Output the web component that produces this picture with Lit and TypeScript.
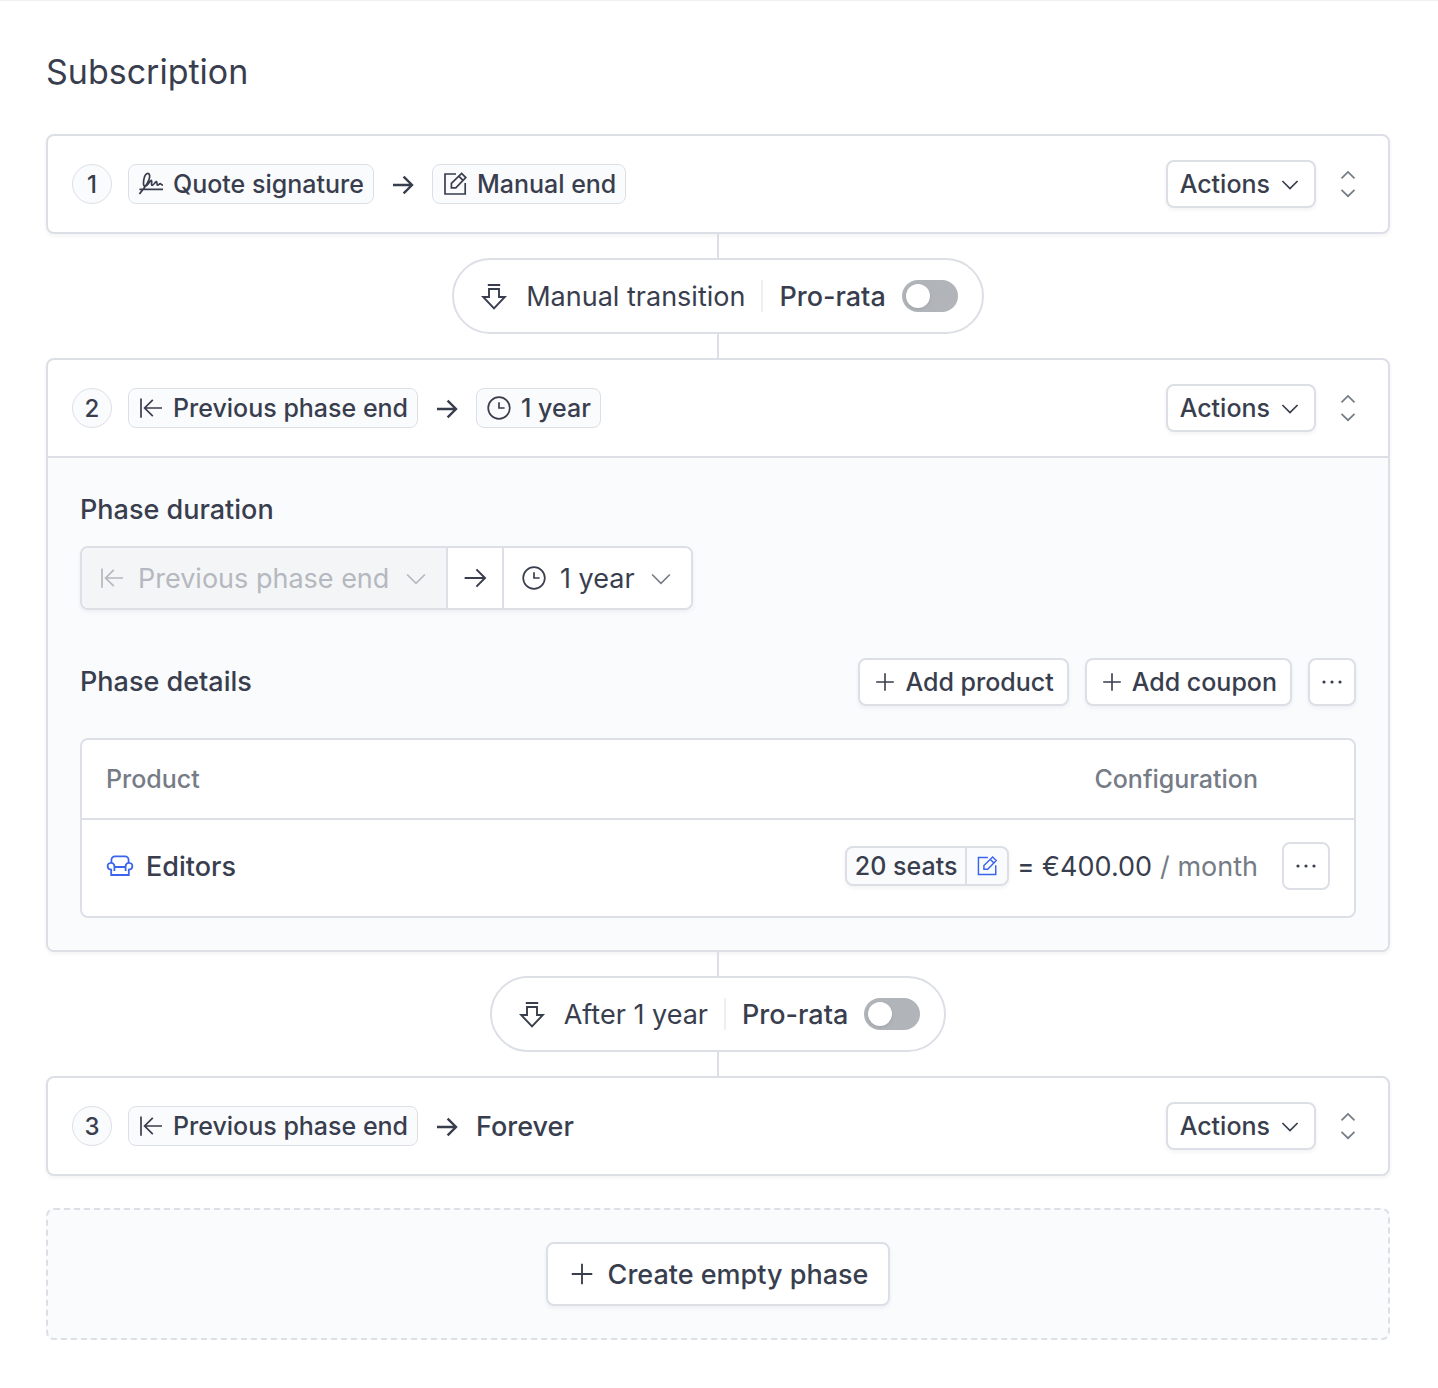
import { LitElement, html, svg, css, nothing, type TemplateResult } from "lit";
import { customElement, property } from "lit/decorators.js";

type IconName =
  | "signature"
  | "edit"
  | "previous"
  | "clock"
  | "arrow"
  | "arrowThin"
  | "transition"
  | "chevron"
  | "sort"
  | "plus"
  | "dots"
  | "sofa";

interface IconShape {
  box: number;
  stroke: number;
  shape: TemplateResult<2>;
}

/* Each icon is drawn on a grid of its own natural size. */
const ICONS: Record<IconName, IconShape> = {
  signature: {
    box: 28,
    stroke: 1.7,
    shape: svg`<path d="M2.4 24C6 19.6 12.9 11.6 12.7 6.2C12.6 2.4 9 2.6 7.6 6.6C6.2 11 5.8 16.4 8.2 16.4C10.8 16.4 12 11.4 14.4 10.4C15.6 11.2 13.6 15.2 15.2 15.4C16.8 15.4 17.6 12 19.4 11.6C20.6 12 19.2 15 20.6 15.2C21.8 15.2 22.2 13.6 23.2 13.6C24 13.6 23.8 15.2 26 15.2M2.4 19.4H26"/>`,
  },
  edit: {
    box: 28,
    stroke: 1.7,
    shape: svg`<path d="M15 4H4V24H24.2V13M10.4 17.8V13.4L20.6 3.4L24.8 7.6L14.8 17.8ZM17.8 6.2L22 10.4"/>`,
  },
  previous: {
    box: 28,
    stroke: 1.7,
    shape: svg`<path d="M4 4.5V23.8M25 14H7.8M15.8 5.9L7.6 14L15.8 22.1"/>`,
  },
  clock: {
    box: 28,
    stroke: 1.7,
    shape: svg`<circle cx="14" cy="14" r="10.8"/><path d="M14 8.2V14H19.6"/>`,
  },
  arrow: {
    box: 26,
    stroke: 2.4,
    shape: svg`<path d="M3 14H22M13.6 5.6L22 14L13.6 22.4"/>`,
  },
  arrowThin: {
    box: 26,
    stroke: 2,
    shape: svg`<path d="M2.6 13H23M14.4 4.4L23 13L14.4 21.6"/>`,
  },
  transition: {
    box: 32,
    stroke: 1.9,
    shape: svg`<path d="M9.8 5H22.2M11 9H21V17H26.8L16 28.4L5.2 17H11Z"/>`,
  },
  chevron: {
    box: 24,
    stroke: 1.7,
    shape: svg`<path d="M4.4 9L12 16.6L19.6 9"/>`,
  },
  sort: {
    box: 32,
    stroke: 1.7,
    shape: svg`<path d="M9.5 10.4L16 4L22.5 10.4M9.5 21.8L16 28.2L22.5 21.8"/>`,
  },
  plus: {
    box: 24,
    stroke: 1.6,
    shape: svg`<path d="M12 3.2V20.8M3.2 12H20.8"/>`,
  },
  dots: {
    box: 24,
    stroke: 0,
    shape: svg`<g fill="currentColor"><circle cx="4" cy="12" r="1.6"/><circle cx="12" cy="12" r="1.6"/><circle cx="20" cy="12" r="1.6"/></g>`,
  },
  sofa: {
    box: 28,
    stroke: 1.8,
    shape: svg`<path d="M5.4 10.2V8A3.6 3.6 0 0 1 9 4.4H19A3.6 3.6 0 0 1 22.6 8V10.2M8.4 19V14A3.4 3.4 0 1 0 5.2 17.6V23H22.8V17.6A3.4 3.4 0 1 0 19.6 14V19M8.4 15H19.6"/>`,
  },
};

const icon = (name: IconName, size?: number) => {
  const { box, stroke, shape } = ICONS[name];
  const side = size ?? box;
  return html`<svg
    class="icon"
    width=${side}
    height=${side}
    viewBox="0 0 ${box} ${box}"
    fill="none"
    stroke="currentColor"
    stroke-width=${stroke}
    aria-hidden="true"
  >
    ${shape}
  </svg>`;
};

const base = css`
  * {
    box-sizing: border-box;
  }
  .icon {
    display: block;
    flex: none;
  }
  button {
    display: inline-flex;
    align-items: center;
    justify-content: center;
    gap: 8px;
    height: 48px;
    margin: 0;
    padding: 0 12px;
    border: 2px solid var(--line);
    border-radius: 8px;
    background: #fff;
    box-shadow: 0 2px 4px rgba(30, 35, 60, 0.06);
    color: inherit;
    font: inherit;
    font-size: 25px;
    font-weight: 500;
    white-space: nowrap;
    cursor: pointer;
  }
  button.square {
    width: 48px;
    padding: 0;
  }
  button.flat {
    box-shadow: none;
  }
`;

interface Edge {
  icon?: IconName;
  text: string;
}

@customElement("phase-card")
export class PhaseCard extends LitElement {
  @property({ type: Number }) number = 1;
  @property({ attribute: false }) from: Edge = { text: "" };
  @property({ attribute: false }) to: Edge = { text: "" };
  @property({ type: Boolean, reflect: true }) open = false;

  static styles = [
    base,
    css`
      :host {
        display: block;
      }
      .card {
        border: 2px solid var(--line);
        border-radius: 8px;
        background: #fff;
        box-shadow: 0 2px 4px rgba(30, 35, 60, 0.06);
        overflow: hidden;
      }
      .head {
        display: flex;
        align-items: center;
        gap: 16px;
        padding: 24px;
      }
      .number {
        display: grid;
        place-items: center;
        flex: none;
        width: 40px;
        height: 40px;
        border: 1px solid var(--line);
        border-radius: 50%;
        background: var(--soft);
        font-size: 24px;
        font-weight: 500;
      }
      .tag {
        display: flex;
        align-items: center;
        gap: 8px;
        height: 40px;
        padding: 0 9px 0 8px;
        border: 1px solid var(--line);
        border-radius: 8px;
        background: var(--soft);
        font-size: 25px;
        font-weight: 500;
        white-space: nowrap;
      }
      .plain {
        font-size: 27px;
        font-weight: 500;
      }
      .tools {
        display: flex;
        align-items: center;
        gap: 16px;
        margin-left: auto;
      }
      button.sort {
        width: 32px;
        height: 32px;
        padding: 0;
        border: 0;
        background: none;
        box-shadow: none;
        color: var(--muted);
      }
      .body {
        padding: 32px;
        border-top: 2px solid var(--line);
        background: var(--soft);
      }
    `,
  ];

  private edge(e: Edge) {
    return e.icon
      ? html`<span class="tag">${icon(e.icon)}${e.text}</span>`
      : html`<span class="plain">${e.text}</span>`;
  }

  render() {
    return html`
      <section class="card">
        <header class="head">
          <span class="number">${this.number}</span>
          ${this.edge(this.from)} ${icon("arrow")} ${this.edge(this.to)}
          <div class="tools">
            <button type="button" aria-haspopup="menu">
              Actions ${icon("chevron")}
            </button>
            <button
              class="sort"
              type="button"
              aria-label="Expand or collapse"
              @click=${() => (this.open = !this.open)}
            >
              ${icon("sort")}
            </button>
          </div>
        </header>
        ${this.open ? html`<div class="body"><slot></slot></div>` : nothing}
      </section>
    `;
  }
}

@customElement("phase-transition")
export class PhaseTransition extends LitElement {
  @property() label = "";

  static styles = [
    base,
    css`
      :host {
        display: flex;
        flex-direction: column;
        align-items: center;
      }
      .line {
        width: 2px;
        height: 24px;
        background: var(--line);
      }
      .pill {
        display: flex;
        align-items: center;
        gap: 16px;
        height: 76px;
        padding: 0 24px;
        border: 2px solid var(--line);
        border-radius: 38px;
        background: #fff;
        font-size: 27px;
        white-space: nowrap;
      }
      .divider {
        width: 2px;
        height: 32px;
        background: #eeeff2;
      }
      label {
        display: flex;
        align-items: center;
        gap: 16px;
        font-weight: 500;
        cursor: pointer;
      }
      input {
        appearance: none;
        display: flex;
        align-items: center;
        width: 56px;
        height: 32px;
        margin: 0;
        padding: 4px;
        border-radius: 16px;
        background: #b1b4b9;
        cursor: pointer;
      }
      input::before {
        content: "";
        width: 24px;
        height: 24px;
        border-radius: 50%;
        background: #fff;
        box-shadow: 0 1px 3px rgba(0, 0, 0, 0.12);
      }
      input:checked {
        justify-content: flex-end;
        background: var(--accent);
      }
    `,
  ];

  render() {
    return html`
      <span class="line"></span>
      <div class="pill">
        ${icon("transition")}
        <span>${this.label}</span>
        <span class="divider"></span>
        <label>Pro-rata <input type="checkbox" role="switch" /></label>
      </div>
      <span class="line"></span>
    `;
  }
}

@customElement("app-root")
export class AppRoot extends LitElement {
  static styles = [
    base,
    css`
      :host {
        --ink: #393e4e;
        --muted: #757c85;
        --line: #dcdfe6;
        --soft: #fafbfd;
        --accent: #3b64ee;
        display: block;
        color: var(--ink);
        font-family: Inter, "Liberation Sans", sans-serif;
      }
      .page {
        padding: 47px 48px 48px 46px;
        border-top: 1px solid #f0f0f2;
      }
      h1 {
        margin: 0 0 38px;
        font-size: 34px;
        font-weight: 400;
        line-height: 48px;
      }
      h2 {
        margin: 0;
        font-size: 27px;
        font-weight: 500;
        line-height: 40px;
      }
      .range {
        display: flex;
        width: fit-content;
        height: 64px;
        margin: 16px 0 48px;
        border: 2px solid var(--line);
        border-radius: 8px;
        background: #fff;
        box-shadow: 0 2px 4px rgba(30, 35, 60, 0.06);
        overflow: hidden;
      }
      .choice {
        display: grid;
        align-items: center;
      }
      .choice > * {
        grid-area: 1 / 1;
      }
      .choice .icon {
        z-index: 1;
        margin: 0 16px;
        pointer-events: none;
      }
      .choice .icon:last-child {
        justify-self: end;
        color: var(--muted);
        stroke-width: 1.4;
      }
      .choice.off,
      .choice.off .icon:last-child {
        color: #b5b8be;
      }
      select {
        appearance: none;
        height: 60px;
        padding: 0 56px;
        border: 0;
        border-radius: 0;
        background: #fff;
        color: inherit;
        font: inherit;
        font-size: 27px;
        cursor: pointer;
      }
      select:disabled {
        background: #f4f5f7;
        color: inherit;
        opacity: 1;
        cursor: default;
      }
      .join {
        display: grid;
        place-items: center;
        width: 58px;
        border: solid var(--line);
        border-width: 0 2px;
      }
      .details {
        display: flex;
        align-items: center;
        gap: 16px;
        margin-bottom: 32px;
      }
      .details h2 {
        margin-right: auto;
      }
      .details button:not(.square) {
        padding: 0 13px;
      }
      table {
        width: 100%;
        border: 2px solid var(--line);
        border-spacing: 0;
        border-radius: 8px;
        background: #fff;
        font-size: 27px;
      }
      th {
        padding: 24px 0;
        border-bottom: 2px solid var(--line);
        color: var(--muted);
        font-size: 25px;
        font-weight: 500;
        line-height: 30px;
        text-align: left;
      }
      td {
        padding: 22px 0 26px;
      }
      th:first-child,
      td:first-child {
        padding-left: 24px;
      }
      th.end {
        text-align: right;
      }
      .more {
        width: 96px;
        padding-left: 24px;
        padding-right: 24px;
      }
      .product {
        display: flex;
        align-items: center;
        gap: 12px;
        font-weight: 500;
      }
      .product .icon {
        color: var(--accent);
      }
      .price {
        display: flex;
        align-items: center;
        justify-content: flex-end;
        gap: 8px;
        white-space: nowrap;
      }
      .per {
        color: var(--muted);
      }
      .equals {
        font-size: 25px;
        font-weight: 500;
      }
      .seats {
        display: flex;
        align-items: center;
        height: 40px;
        border: 2px solid var(--line);
        border-radius: 8px;
        background: var(--soft);
        box-shadow: 0 2px 4px rgba(30, 35, 60, 0.06);
        font-size: 25px;
        font-weight: 500;
      }
      .seats span {
        padding: 0 8px;
      }
      .seats button {
        width: 42px;
        height: 36px;
        padding: 0;
        border-width: 0 0 0 2px;
        border-radius: 0;
        background: none;
        box-shadow: none;
        color: var(--accent);
      }
      .empty {
        display: flex;
        justify-content: center;
        margin-top: 32px;
        padding: 32px;
        border: 2px dashed var(--line);
        border-radius: 8px;
        background: var(--soft);
      }
      .empty button {
        gap: 12px;
        height: 64px;
        padding: 0 20px;
        font-size: 27px;
      }
    `,
  ];

  private readonly previous: Edge = {
    icon: "previous",
    text: "Previous phase end",
  };

  render() {
    return html`
      <main class="page">
        <h1>Subscription</h1>
        <phase-card
          .number=${1}
          .from=${{ icon: "signature", text: "Quote signature" }}
          .to=${{ icon: "edit", text: "Manual end" }}
        ></phase-card>
        <phase-transition label="Manual transition"></phase-transition>
        <phase-card
          open
          .number=${2}
          .from=${this.previous}
          .to=${{ icon: "clock", text: "1 year" }}
        >
          <h2>Phase duration</h2>
          <div class="range">
            <div class="choice off">
              <select disabled aria-label="Phase start">
                <option>Previous phase end</option>
              </select>
              ${icon("previous")} ${icon("chevron", 28)}
            </div>
            <span class="join">${icon("arrowThin")}</span>
            <div class="choice">
              <select aria-label="Phase end">
                <option>1 year</option>
              </select>
              ${icon("clock")} ${icon("chevron", 28)}
            </div>
          </div>
          <div class="details">
            <h2>Phase details</h2>
            <button type="button">${icon("plus")} Add product</button>
            <button type="button">${icon("plus")} Add coupon</button>
            <button class="square" type="button" aria-label="More">
              ${icon("dots")}
            </button>
          </div>
          <table>
            <thead>
              <tr>
                <th scope="col">Product</th>
                <th scope="col" class="end">Configuration</th>
                <th scope="col" class="more" aria-label="Options"></th>
              </tr>
            </thead>
            <tbody>
              <tr>
                <td><div class="product">${icon("sofa")} Editors</div></td>
                <td>
                  <div class="price">
                    <div class="seats">
                      <span>20 seats</span>
                      <button type="button" aria-label="Edit seats">
                        ${icon("edit", 24)}
                      </button>
                    </div>
                    <span class="equals">=</span>
                    <span>€400.00</span>
                    <span class="per">/ month</span>
                  </div>
                </td>
                <td class="more">
                  <button class="square flat" type="button" aria-label="More">
                    ${icon("dots")}
                  </button>
                </td>
              </tr>
            </tbody>
          </table>
        </phase-card>
        <phase-transition label="After 1 year"></phase-transition>
        <phase-card
          .number=${3}
          .from=${this.previous}
          .to=${{ text: "Forever" }}
        ></phase-card>
        <div class="empty">
          <button type="button">${icon("plus", 28)} Create empty phase</button>
        </div>
      </main>
    `;
  }
}
